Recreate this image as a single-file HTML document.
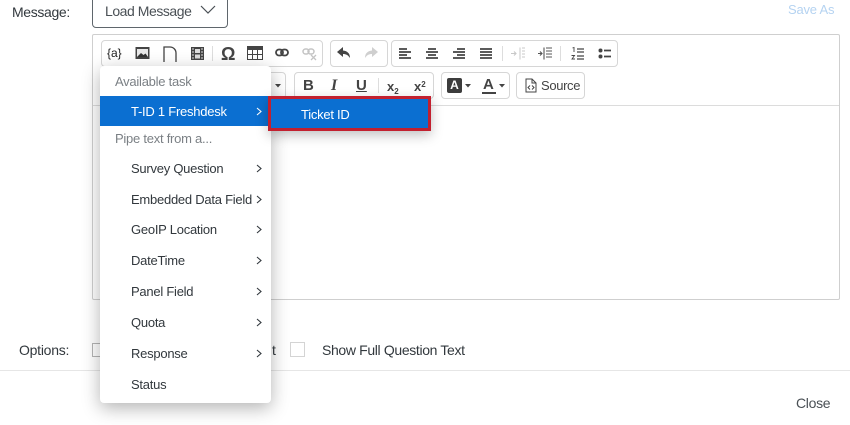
<!DOCTYPE html>
<html><head><meta charset="utf-8">
<style>
html,body{margin:0;padding:0;background:#fff}
#p{position:relative;width:850px;height:425px;overflow:hidden;background:#fff;font-family:"Liberation Sans",sans-serif;color:#32383d;font-size:14px;letter-spacing:-.35px}
.a{position:absolute;white-space:nowrap}
.g{position:absolute;border:1px solid #d6d6d6;border-radius:4px;background:#fff;box-sizing:border-box}
.i{position:absolute;overflow:visible}
.m{position:absolute;left:131px;white-space:nowrap;font-size:13px;line-height:18px;color:#32383d;letter-spacing:-.25px}
.c{position:absolute;left:256px}
</style></head><body><div id="p">
<div class="a" style="left:12px;top:4px;line-height:16px;">Message:</div>
<div class="a" style="left:92px;top:-6px;width:136px;height:34px;box-sizing:border-box;border:1px solid #5f666c;border-radius:4px;"></div>
<div class="a" style="left:105px;top:3px;line-height:16px;color:#4a5055;letter-spacing:-.45px">Load Message</div>
<svg class="i" style="left:200px;top:5px" width="16" height="10"><path d="M1 1l7 7 7-7" fill="none" stroke="#4a5055" stroke-width="1.2"/></svg>
<div class="a" style="left:788px;top:2px;line-height:16px;font-size:13px;color:#b5d3f1;letter-spacing:-.2px">Save As</div>

<div class="a" style="left:92px;top:34px;width:748px;height:266px;box-sizing:border-box;border:1px solid #cfcfcf;border-radius:2px"></div>
<div class="a" style="left:93px;top:105px;width:746px;height:1px;background:#dcdcdc"></div>

<div class="g" style="left:101px;top:40px;width:222px;height:27px"></div>
<div class="a" style="left:107px;top:46px;font-size:12px;line-height:14px;color:#222;letter-spacing:0">{a}</div>
<svg class="i" style="left:135px;top:46px" width="15" height="14"><rect x=".5" y="1" width="14" height="12" fill="#444"/><rect x="2" y="3" width="11" height="8" fill="#e8e8e8"/><path d="M2 11l4-4 2.500 2 2-1.500 2.500 3.500z" fill="#333"/></svg>
<svg class="i" style="left:163px;top:46px" width="14" height="16"><path d="M1 16V1h6a6 6 0 0 1 6 6v9" fill="none" stroke="#444" stroke-width="1.300"/></svg>
<svg class="i" style="left:191px;top:47px" width="13" height="13"><rect width="13" height="13" fill="#444"/><rect x="4" y="2" width="5" height="4" fill="#ddd"/><rect x="4" y="7.500" width="5" height="4" fill="#ddd"/><path d="M1 2h2M1 5h2M1 8h2M1 11h2M10 2h2M10 5h2M10 8h2M10 11h2" stroke="#ddd"/></svg>
<div class="a" style="left:212px;top:46px;width:1px;height:15px;background:#ddd"></div>
<div class="a" style="left:221px;top:44px;font-size:18px;line-height:20px;font-weight:bold;color:#444;letter-spacing:0">Ω</div>
<svg class="i" style="left:247px;top:46px" width="16" height="14"><rect x=".5" y=".5" width="15" height="13" fill="#fff" stroke="#444"/><rect y="0" width="16" height="4" fill="#444"/><path d="M5.500 4v9M10.500 4v9M0 8.500h16" stroke="#444"/></svg>
<svg class="i" style="left:275px;top:48px" width="14" height="10"><rect x="1" y="1.500" width="7" height="6" rx="3" fill="none" stroke="#444" stroke-width="1.800"/><rect x="6" y="1.500" width="7" height="6" rx="3" fill="none" stroke="#444" stroke-width="1.800"/></svg>
<svg class="i" style="left:302px;top:48px" width="15" height="13"><rect x="1" y="1" width="6" height="5" rx="2.500" fill="none" stroke="#c4c4c4" stroke-width="1.500"/><rect x="6" y="1" width="6" height="5" rx="2.500" fill="none" stroke="#c4c4c4" stroke-width="1.500"/><path d="M9 7l5 5M14 7l-5 5" stroke="#c4c4c4" stroke-width="1.300"/></svg>

<div class="g" style="left:330px;top:40px;width:58px;height:27px"></div>
<svg class="i" style="left:337px;top:47px" width="14" height="12"><path d="M6 0L0 5l6 5V7c3 0 5 1 7 4 0-5-3-7-7-7.500z" fill="#444"/></svg>
<svg class="i" style="left:364px;top:47px" width="14" height="12"><path d="M8 0l6 5-6 5V7c-3 0-5 1-7 4 0-5 3-7 7-7.500z" fill="#cfcfcf"/></svg>

<div class="g" style="left:391px;top:40px;width:227px;height:27px"></div>
<svg class="i" style="left:399px;top:48px" width="100" height="11"><g fill="none" stroke="#444" stroke-width="1.700"><path d="M0 1h8M0 4h12M0 7h8M0 10h12"/><path d="M29 1h8M27 4h12M29 7h8M27 10h12"/><path d="M58 1h8M54 4h12M58 7h8M54 10h12"/><path d="M81 1h12M81 4h12M81 7h12M81 10h12"/></g></svg>
<div class="a" style="left:502px;top:46px;width:1px;height:15px;background:#ddd"></div>
<svg class="i" style="left:511px;top:47px" width="14" height="13"><path d="M9 .5v12" stroke="#c8c8c8"/><path d="M0 6.500h5M3 4.500l2 2-2 2M11 1h3M11 4h3M11 7h3M11 10h3" stroke="#c8c8c8" fill="none" stroke-width="1.100"/></svg>
<svg class="i" style="left:538px;top:47px" width="14" height="13"><path d="M6 .5v12" stroke="#444"/><path d="M0 6.500h4M2 4.500l2 2-2 2M8 1h6M8 4h6M8 7h6M8 10h6" stroke="#555" fill="none" stroke-width="1.100"/></svg>
<div class="a" style="left:560px;top:46px;width:1px;height:15px;background:#ddd"></div>
<svg class="i" style="left:571px;top:47px" width="13" height="13"><path d="M6 2h7M6 5h7M6 9h7M6 12h7" stroke="#444" stroke-width="1.300"/><path d="M1.500 1L3 .5V5M.5 8.500h3L1 12h3" stroke="#444" fill="none" stroke-width=".9"/></svg>
<svg class="i" style="left:598px;top:48px" width="13" height="12"><circle cx="2.500" cy="2.500" r="2" fill="#444"/><circle cx="2.500" cy="8.500" r="2" fill="#444"/><path d="M6 2.500h7M6 8.500h7" stroke="#444" stroke-width="1.800"/></svg>

<div class="g" style="left:262px;top:72px;width:24px;height:27px"></div>
<svg class="i" style="left:275px;top:84px" width="7" height="4"><path d="M0 0h6L3 3.500z" fill="#444"/></svg>
<div class="g" style="left:294px;top:72px;width:140px;height:27px"></div>
<div class="a" style="left:303px;top:77px;font-size:15px;line-height:17px;font-weight:bold;color:#444;letter-spacing:0">B</div>
<div class="a" style="left:331px;top:77px;font-size:16px;line-height:17px;font-weight:bold;font-style:italic;font-family:'Liberation Serif',serif;color:#444;letter-spacing:0">I</div>
<div class="a" style="left:356px;top:77px;font-size:15px;line-height:17px;font-weight:bold;color:#444;text-decoration:underline;letter-spacing:0">U</div>
<div class="a" style="left:378px;top:78px;width:1px;height:15px;background:#ddd"></div>
<div class="a" style="left:387px;top:79px;font-size:13px;line-height:15px;font-weight:bold;color:#444;letter-spacing:0">x<span style="font-size:8px;position:relative;top:3px">2</span></div>
<div class="a" style="left:414px;top:79px;font-size:13px;line-height:15px;font-weight:bold;color:#444;letter-spacing:0">x<span style="font-size:8px;position:relative;top:-4px">2</span></div>
<div class="g" style="left:441px;top:72px;width:69px;height:27px"></div>
<div class="a" style="left:447px;top:78px;width:15px;height:15px;background:#3c3c3c;border-radius:2px;color:#fff;font-size:12px;font-weight:bold;line-height:15px;text-align:center;letter-spacing:0">A</div>
<svg class="i" style="left:465px;top:84px" width="7" height="4"><path d="M0 0h6L3 3.500z" fill="#444"/></svg>
<div class="a" style="left:483px;top:77px;font-size:15px;line-height:15px;font-weight:bold;color:#444;letter-spacing:0">A</div>
<div class="a" style="left:482px;top:92px;width:14px;height:2px;background:#444"></div>
<svg class="i" style="left:499px;top:84px" width="7" height="4"><path d="M0 0h6L3 3.500z" fill="#444"/></svg>
<div class="g" style="left:516px;top:72px;width:69px;height:27px"></div>
<svg class="i" style="left:525px;top:78px" width="12" height="15"><path d="M1 1h6l4 4v9H1zM7 1v4h4" fill="none" stroke="#444"/><path d="M5 7.500L3 9.500l2 2M7 7.500l2 2-2 2" fill="none" stroke="#444"/></svg>
<div class="a" style="left:541px;top:78px;font-size:13px;line-height:15px;color:#444;letter-spacing:-.35px">Source</div>

<div class="a" style="left:19px;top:342px;line-height:16px;letter-spacing:-.25px">Options:</div>
<div class="a" style="left:92px;top:343px;width:15px;height:14px;box-sizing:border-box;border:1px solid #b5b5b5"></div>
<div class="a" style="left:272px;top:342px;line-height:16px;color:#32383d">t</div>
<div class="a" style="left:290px;top:342px;width:15px;height:15px;box-sizing:border-box;border:1px solid #d4d4d4"></div>
<div class="a" style="left:322px;top:342px;line-height:16px;">Show Full Question Text</div>
<div class="a" style="left:0;top:370px;width:850px;height:1px;background:#e6e6e6"></div>
<div class="a" style="left:796px;top:395px;line-height:16px;color:#4a5055;letter-spacing:-.3px">Close</div>

<div class="a" style="left:100px;top:66px;width:171px;height:337px;background:#fff;border-radius:4px;box-shadow:0 5px 18px rgba(0,0,0,.3)"></div>
<div class="m" style="left:115px;top:73px;color:#7b8085">Available task</div>
<div class="a" style="left:100px;top:96px;width:171px;height:30px;background:#0b6fd1"></div>
<div class="m" style="top:103px;color:#fff">T-ID 1 Freshdesk</div>
<svg class="c" style="top:107px" width="7" height="9"><path d="M1 1l4 3.500L1 8" fill="none" stroke="#fff" stroke-width="1.100"/></svg>
<div class="m" style="left:115px;top:130px;color:#7b8085">Pipe text from a...</div>
<div class="m" style="top:160px">Survey Question</div>
<svg class="c" style="top:164px" width="7" height="9"><path d="M1 1l4 3.500L1 8" fill="none" stroke="#32383d" stroke-width="1.100"/></svg>
<div class="m" style="top:191px">Embedded Data Field</div>
<svg class="c" style="top:195px" width="7" height="9"><path d="M1 1l4 3.500L1 8" fill="none" stroke="#32383d" stroke-width="1.100"/></svg>
<div class="m" style="top:221px">GeoIP Location</div>
<svg class="c" style="top:225px" width="7" height="9"><path d="M1 1l4 3.500L1 8" fill="none" stroke="#32383d" stroke-width="1.100"/></svg>
<div class="m" style="top:252px">DateTime</div>
<svg class="c" style="top:256px" width="7" height="9"><path d="M1 1l4 3.500L1 8" fill="none" stroke="#32383d" stroke-width="1.100"/></svg>
<div class="m" style="top:283px">Panel Field</div>
<svg class="c" style="top:287px" width="7" height="9"><path d="M1 1l4 3.500L1 8" fill="none" stroke="#32383d" stroke-width="1.100"/></svg>
<div class="m" style="top:314px">Quota</div>
<svg class="c" style="top:318px" width="7" height="9"><path d="M1 1l4 3.500L1 8" fill="none" stroke="#32383d" stroke-width="1.100"/></svg>
<div class="m" style="top:345px">Response</div>
<svg class="c" style="top:349px" width="7" height="9"><path d="M1 1l4 3.500L1 8" fill="none" stroke="#32383d" stroke-width="1.100"/></svg>
<div class="m" style="top:376px">Status</div>

<div class="a" style="left:268px;top:96px;width:163px;height:35px;box-sizing:border-box;border:3px solid #c2202f;background:#0b6fd1;box-shadow:0 4px 12px rgba(0,0,0,.25)"></div>
<div class="m" style="left:301px;top:106px;color:#fff">Ticket ID</div>
</div></body></html>
